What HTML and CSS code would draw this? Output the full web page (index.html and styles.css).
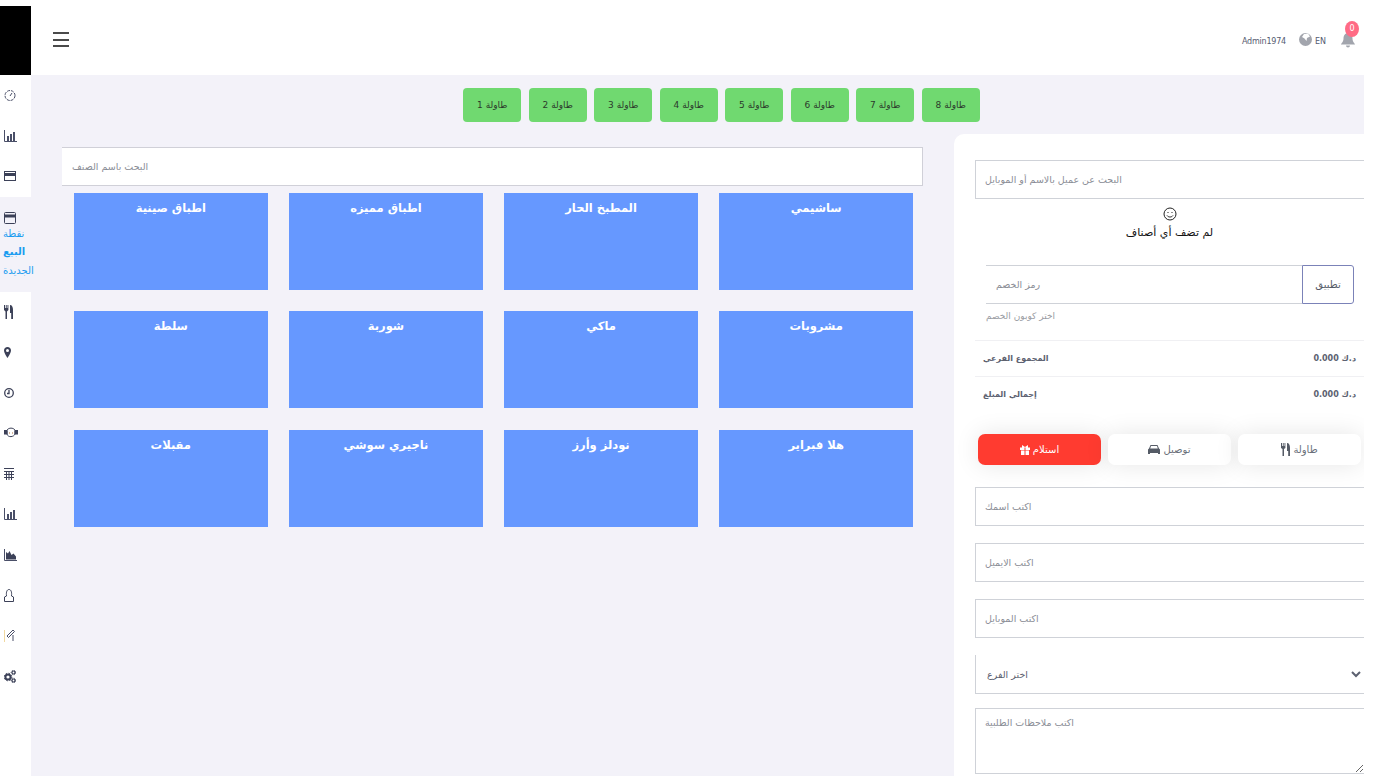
FILE: index.html
```html
<!DOCTYPE html>
<html lang="ar">
<head>
    <meta charset="UTF-8">
    <meta name="viewport" content="width=device-width, initial-scale=1.0">
    <title>نقطة البيع الجديدة</title>
    <link rel="stylesheet" href="styles.css">
</head>
<body>
    <aside class="sidebar">
        <div class="logo"></div>
        <nav class="side-nav">
            <a class="side-item" href="#"><svg width="12" height="13" viewBox="0 0 12 13" fill="none" stroke="#4a4f68"><circle cx="6" cy="6.5" r="5" stroke-dasharray="3 1"/><path d="M6 7l2-3"/></svg></a>
            <a class="side-item" href="#"><svg width="13" height="12" viewBox="0 0 13 12"><path d="M.5 0v11.5H13" fill="none" stroke="#4a4f68"/><path d="M3 6h2v5H3zM6 4h2v7H6zM9 2h2v9H9z" fill="#4a4f68"/></svg></a>
            <a class="side-item" href="#"><svg width="12" height="12" viewBox="0 0 12 12"><rect x=".5" y="1.5" width="11" height="9" fill="none" stroke="#3c4158"/><rect x="1" y="3" width="10" height="3" fill="#3c4158"/></svg></a>
            <a class="side-item side-active" href="#">
                <svg width="12" height="12" viewBox="0 0 12 12"><rect x=".5" y=".5" width="11" height="11" rx="1" fill="none" stroke="#3c4158"/><rect x="1" y="2.5" width="10" height="3" fill="#3c4158"/></svg>
                <span>نقطة</span>
                <span class="side-strong">البيع</span>
                <span>الجديدة</span>
            </a>
            <a class="side-item" href="#"><svg width="9" height="14" viewBox="0 0 9 14" fill="#3c4158"><path d="M0 0h1v3h.8V0h.9v3h.8V0h.9v5L3 6.500V14H1.500V6.500L0 5zM6 0c2 0 3 2 3 5v9H7.200V8H6z"/></svg></a>
            <a class="side-item" href="#"><svg width="7" height="11" viewBox="0 0 7 11"><path d="M3.500 0C1.500 0 0 1.500 0 3.500 0 6 3.500 11 3.500 11S7 6 7 3.500C7 1.500 5.500 0 3.500 0zm0 5a1.500 1.500 0 1 1 0-3 1.500 1.500 0 0 1 0 3z" fill="#3c4158"/></svg></a>
            <a class="side-item" href="#"><svg width="10" height="12" viewBox="0 0 10 12" fill="none" stroke="#3c4158" stroke-width="1.300"><circle cx="5" cy="6" r="4.300"/><path d="M5 3v3.500H3"/></svg></a>
            <a class="side-item" href="#"><svg width="14" height="12" viewBox="0 0 14 12" fill="none" stroke="#3c4158"><path d="M3 3c2-2.500 6-2.500 8 0v4c-1 3-7 4-8 0z"/><path d="M5 6h1M8 6h1" stroke="#b0703a"/><path d="M0 3.500h3v3.500H0zM11 3.500h3v3.500h-3z" fill="#3c4158"/></svg></a>
            <a class="side-item" href="#"><svg width="10" height="12" viewBox="0 0 10 12" fill="none" stroke="#3c4158"><path d="M0 .5h10M0 3.500h10M0 6.500h10M0 9.500h10M2.500 3v9M5 3v9M7.500 3v9"/></svg></a>
            <a class="side-item" href="#"><svg width="13" height="12" viewBox="0 0 13 12"><path d="M.5 0v11.500H13" fill="none" stroke="#4a4f68"/><path d="M3 6h2v5H3zM6 4h2v7H6zM9 2h2v9H9z" fill="#4a4f68"/></svg></a>
            <a class="side-item" href="#"><svg width="13" height="12" viewBox="0 0 13 12"><path d="M.5 0v11.500H13" fill="none" stroke="#4a4f68"/><path d="M2 10.500V3l2 1.500L5.500 2l2 4 2-1.500 2.500 3v3z" fill="#3c4158"/></svg></a>
            <a class="side-item" href="#"><svg width="10" height="13" viewBox="0 0 10 13" fill="none" stroke="#3c4158"><path d="M2.500 7C2 3 3 .5 5 .5S8 3 7.500 7l2 1v4.500H.5V8z"/></svg></a>
            <a class="side-item" href="#"><svg width="12" height="13" viewBox="0 0 12 13" fill="none" stroke="#4a4f68"><path d="M.5 1v12" stroke="#f0d8a0"/><path d="M3 7l6-6 1.500 1.500-6 6zM9 6v6"/></svg></a>
            <a class="side-item" href="#"><svg width="12" height="13" viewBox="0 0 12 13" fill="none" stroke="#3c4158"><circle cx="4" cy="7" r="2.600" stroke-width="2"/><circle cx="4" cy="7" r="3.800" stroke-dasharray="1.500 1.500"/><circle cx="9.500" cy="2.500" r="1.500" stroke-width="1.200"/><circle cx="9.500" cy="2.500" r="2.300" stroke-dasharray="1 1"/><circle cx="9.500" cy="10.500" r="1.500" stroke-width="1.200"/><circle cx="9.500" cy="10.500" r="2.300" stroke-dasharray="1 1"/></svg></a>
        </nav>
    </aside>

    <div class="main">
        <header class="topbar">
            <button class="burger" aria-label="menu"><i></i><i></i><i></i></button>
            <div class="top-right">
                <span class="user-name">Admin1974</span>
                <span class="lang">
                    <svg width="13" height="15" viewBox="0 0 13 15"><circle cx="6.500" cy="7.500" r="6.500" fill="#a2a5ad"/><path d="M5 2l4-.5 2 3-3 1.500-.5 3-2-2.500L3 5z" fill="#fff"/></svg>
                    <span class="lang-code">EN</span>
                </span>
                <span class="bell">
                    <svg width="16" height="16" viewBox="0 0 16 16"><path d="M8 1C5 1 3.500 3.500 3.500 6.500 3.500 10 1 11.500 1 12.500h14c0-1-2.500-2.500-2.500-6C12.500 3.500 11 1 8 1zM6 13.500a2 2 0 0 0 4 0z" fill="#a2a5ad"/></svg>
                    <span class="badge">0</span>
                </span>
            </div>
        </header>

        <div class="content">
            <div class="tables">
                <button class="table-btn">طاولة 1</button>
                <button class="table-btn">طاولة 2</button>
                <button class="table-btn">طاولة 3</button>
                <button class="table-btn">طاولة 4</button>
                <button class="table-btn">طاولة 5</button>
                <button class="table-btn">طاولة 6</button>
                <button class="table-btn">طاولة 7</button>
                <button class="table-btn">طاولة 8</button>
            </div>

            <div class="columns">
                <section class="menu">
                    <input class="menu-search" type="text" placeholder="البحث باسم الصنف">
                    <div class="cats">
                        <div class="cat">ساشيمي</div>
                        <div class="cat">المطبخ الحار</div>
                        <div class="cat">اطباق مميزه</div>
                        <div class="cat">اطباق صينية</div>
                        <div class="cat">مشروبات</div>
                        <div class="cat">ماكي</div>
                        <div class="cat">شوربة</div>
                        <div class="cat">سلطة</div>
                        <div class="cat">هلا فبراير</div>
                        <div class="cat">نودلز وأرز</div>
                        <div class="cat">ناجيري سوشي</div>
                        <div class="cat">مقبلات</div>
                    </div>
                </section>

                <section class="cart">
                    <input class="field" type="text" placeholder="البحث عن عميل بالاسم أو الموبايل">
                    <div class="empty">
                        <svg width="14" height="14" viewBox="0 0 14 14" fill="none" stroke="#222"><circle cx="7" cy="7" r="6"/><path d="M4 8.500c1.500 2 4.500 2 6 0"/><path d="M5 5v1M9 5v1"/></svg>
                        <p>لم تضف أي أصناف</p>
                    </div>
                    <div class="coupon">
                        <input class="coupon-input" type="text" placeholder="رمز الخصم">
                        <button class="coupon-btn">تطبيق</button>
                    </div>
                    <p class="coupon-help">اختر كوبون الخصم</p>
                    <div class="sum-row"><span>المجموع الفرعي</span><span>د.ك 0.000</span></div>
                    <div class="sum-row"><span>إجمالي المبلغ</span><span>د.ك 0.000</span></div>

                    <div class="order-types">
                        <button class="type-btn type-active">
                            <svg width="10" height="10" viewBox="0 0 10 10" fill="#fff"><path d="M0 2.500h4.500V5H0zM5.500 2.500H10V5H5.500zM1 5.500h3.500V10H1zM5.500 5.500H9V10H5.500zM2 0l3 2 3-2v2.500H2z"/></svg>
                            استلام
                        </button>
                        <button class="type-btn">
                            <svg width="12" height="10" viewBox="0 0 12 10" fill="#555b66"><path d="M2.500 0h7L11 3.500l1 1V9h-2V8H2v1H0V4.500l1-1zM3 1L2.200 3.500h7.600L9 1z"/></svg>
                            توصيل
                        </button>
                        <button class="type-btn">
                            <svg width="9" height="13" viewBox="0 0 9 13" fill="#555b66"><path d="M0 0h1v3h.8V0h.9v3h.8V0h.9v5L3 6v7H1.500V6L0 5zM6 0c2 0 3 2 3 5v8H7.200V8H6z"/></svg>
                            طاولة
                        </button>
                    </div>

                    <input class="field form-field" type="text" placeholder="اكتب اسمك">
                    <input class="field form-field" type="text" placeholder="اكتب الايميل">
                    <input class="field form-field" type="text" placeholder="اكتب الموبايل">
                    <select class="field form-field branch">
                        <option>اختر الفرع</option>
                    </select>
                    <textarea class="notes" placeholder="اكتب ملاحظات الطلبية"></textarea>
                </section>
            </div>
        </div>
    </div>
</body>
</html>
```

FILE: styles.css
```css
html, body {
    height: 100%;
}
body {
    margin: 0;
    display: flex;
    overflow: hidden;
    background-color: #fff;
    font-family: "DejaVu Sans", sans-serif;
    color: #4a4f5c;
}
input, select, textarea, button {
    font-family: inherit;
    box-sizing: border-box;
}
input::placeholder, textarea::placeholder {
    color: #8a8d96;
}

/* sidebar */
.sidebar {
    position: relative;
    z-index: 1;
    width: 31px;
    flex-shrink: 0;
    padding-top: 6px;
    box-sizing: border-box;
}
.logo {
    height: 69px;
    background-color: #000;
}
.side-item {
    height: 40.5px;
    box-sizing: border-box;
    display: flex;
    flex-direction: column;
    align-items: flex-start;
    justify-content: center;
    padding-left: 4px;
    text-decoration: none;
}
.side-active {
    height: 95px;
    width: 31px;
    justify-content: flex-start;
    padding: 15px 0 0 3px;
    background-color: #f3f2f9;
    color: #1a9cf0;
    font-size: 10px;
    line-height: 18.500px;
    white-space: nowrap;
}
.side-active svg {
    margin: 0 0 1px 1px;
}
.side-strong {
    font-weight: bold;
}

/* top bar */
.main {
    flex: 1;
    min-width: 0;
    display: flex;
    flex-direction: column;
}
.topbar {
    height: 75px;
    flex-shrink: 0;
    display: flex;
    align-items: center;
    justify-content: space-between;
    padding: 4px 21px 0 22px;
    box-sizing: border-box;
}
.burger {
    width: 16px;
    height: 15px;
    padding: 0;
    border: 0;
    background: none;
    display: flex;
    flex-direction: column;
    justify-content: space-between;
}
.burger i {
    display: block;
    height: 2px;
    background-color: #4a4a4a;
}
.top-right {
    display: flex;
    align-items: center;
    font-size: 8px;
    color: #555b70;
}
.user-name {
    margin: 3px 13px 0 0;
    letter-spacing: -.2px;
}
.lang {
    display: flex;
    align-items: center;
    gap: 3px;
    margin-right: 14px;
}
.lang-code {
    margin-top: 3px;
}
.bell {
    position: relative;
    display: flex;
}
.badge {
    position: absolute;
    top: -11px;
    left: 5px;
    width: 14px;
    height: 16px;
    border-radius: 50%;
    background-color: #ff6b85;
    color: #fff;
    font-size: 8px;
    line-height: 16px;
    text-align: center;
}

/* page body */
.content {
    flex: 1;
    width: 1333px;
    min-height: 0;
    background-color: #f3f2f9;
}
.tables {
    display: flex;
    justify-content: center;
    gap: 7.500px;
    padding: 13px 0 0 48px;
}
.table-btn {
    width: 58px;
    height: 34px;
    padding: 0;
    border: 0;
    border-radius: 4px;
    background-color: #70d970;
    color: #2c3a2c;
    font-size: 9px;
}
.columns {
    display: flex;
    gap: 31px;
    margin-top: 12px;
    padding-left: 31px;
    height: 642px;
}

/* categories */
.menu {
    width: 861px;
    flex-shrink: 0;
    padding-top: 13px;
}
.menu-search {
    display: block;
    width: 100%;
    height: 39px;
    padding: 0 10px;
    border: 1px solid #d0d0d8;
    border-left: 0;
    background-color: #fff;
    font-size: 9.500px;
}
.cats {
    direction: rtl;
    display: grid;
    grid-template-columns: repeat(4, 1fr);
    grid-auto-rows: 97px;
    gap: 21.400px 21.500px;
    margin-top: 7px;
    padding: 0 10px 0 12px;
}
.cat {
    padding-top: 8px;
    background-color: #6698ff;
    color: #fff;
    font-size: 11.500px;
    line-height: 15px;
    font-weight: bold;
    text-align: center;
}

/* cart panel */
.cart {
    flex: 1;
    min-width: 0;
    padding: 26px 0 0 21px;
    background-color: #fff;
    border-top-left-radius: 10px;
    overflow: hidden;
}
.field {
    display: block;
    width: 390px;
    height: 39px;
    padding: 0 9px;
    border: 1px solid #cfd2d8;
    background-color: #fff;
    font-size: 9.500px;
}
.empty {
    margin-top: 8px;
    text-align: center;
    font-size: 11px;
    color: #111;
}
.empty svg {
    display: block;
    margin: 0 auto;
}
.empty p {
    margin: 5px 0 0;
}
.coupon {
    display: flex;
    width: 368px;
    margin: 26px 0 0 11px;
}
.coupon-input {
    flex: 1;
    min-width: 0;
    height: 39px;
    padding: 0 10px;
    border: 1px solid #cfd2d8;
    border-width: 1px 0;
    font-size: 9.500px;
}
.coupon-btn {
    width: 52px;
    height: 39px;
    padding: 0;
    border: 1px solid #7b82b8;
    border-radius: 0 3px 3px 0;
    background-color: #fff;
    color: #555b66;
    font-size: 10px;
}
.coupon-help {
    margin: 6px 0 18px 11px;
    font-size: 9px;
    line-height: 12px;
    color: #9a9ca3;
}
.sum-row {
    display: flex;
    justify-content: space-between;
    width: 389px;
    height: 36px;
    box-sizing: border-box;
    padding: 0 8px;
    border-top: 1px solid #f0f0f3;
    align-items: center;
    font-size: 8px;
    font-weight: bold;
    color: #5c6170;
}
.order-types {
    display: flex;
    gap: 7px;
    margin: 22px 0 22px 3px;
    width: 383px;
}
.type-btn {
    flex: 1;
    height: 31px;
    display: flex;
    align-items: center;
    justify-content: center;
    gap: 3px;
    padding: 0;
    border: 0;
    border-radius: 7px;
    background-color: #fff;
    color: #6a6f7a;
    font-size: 10px;
    box-shadow: 0 0 24px rgba(0, 0, 0, .1);
}
.type-active {
    background-color: #ff3b30;
    color: #fff;
}
.form-field {
    margin-bottom: 17px;
}
.branch {
    border-top: 0;
    margin-bottom: 14px;
    padding-left: 7px;
    color: #5c6170;
}
.notes {
    display: block;
    width: 390px;
    height: 66px;
    padding: 8px 9px 4px;
    border: 1px solid #cfd2d8;
    font-size: 9.500px;
}
```
